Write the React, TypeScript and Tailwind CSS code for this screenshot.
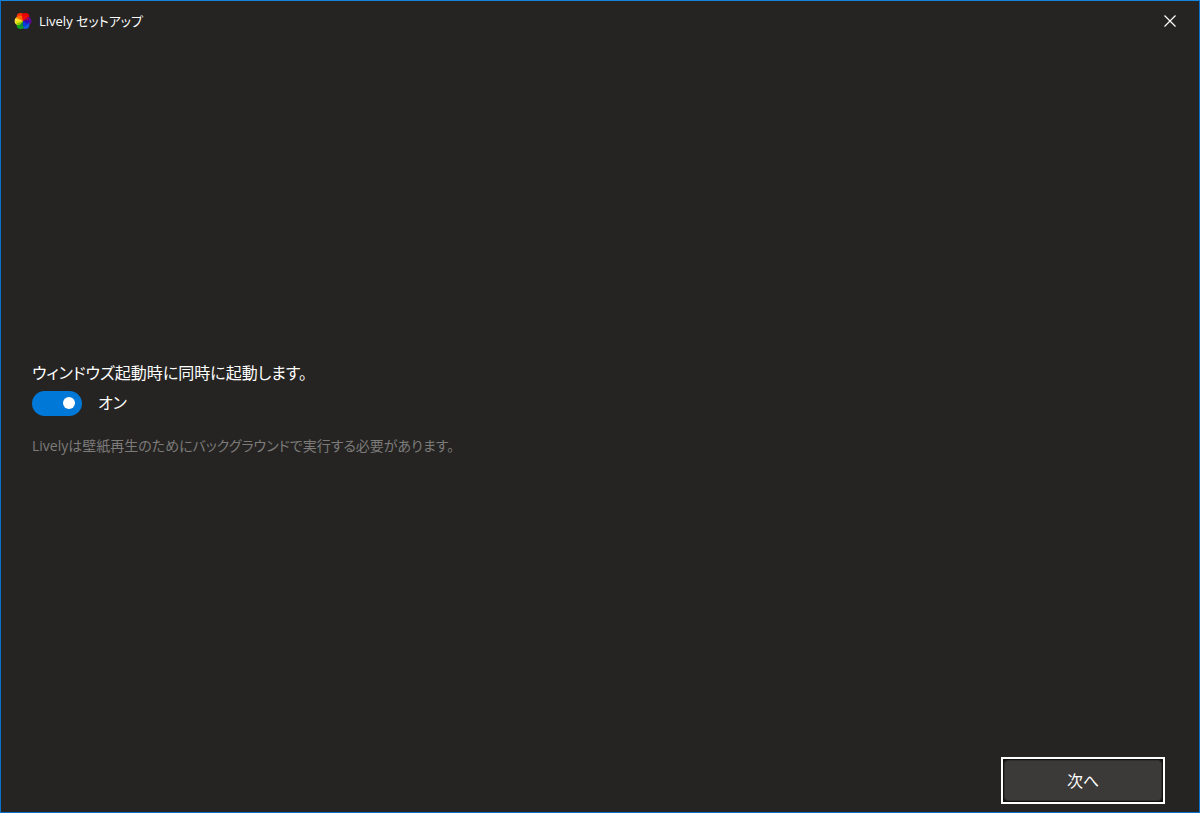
import { useState } from "react";

function Logo() {
  return (
    <svg viewBox="0 0 18 18" className="size-[18px]" aria-hidden="true">
      <circle cx="6.6" cy="5" r="4" fill="#ff3000" />
      <circle cx="11.4" cy="5" r="4" fill="#e60000" />
      <circle cx="13.4" cy="9" r="4" fill="#5a08a0" />
      <circle cx="11.4" cy="13" r="4" fill="#0d58dc" />
      <circle cx="6.6" cy="13" r="4" fill="#10a020" />
      <circle cx="4.6" cy="9" r="4" fill="#ffe040" />
      <path d="M9 9 1.6 6.4A4 4 0 0 1 4.5 5Z" fill="#ffa800" />
      <path d="M9 9 3 5.6 4.5 3.4 8 4Z" fill="#ff6a00" />
      <path d="M9 9 8 3.4 13 3.4 13.6 5.4Z" fill="#f00c08" />
      <path d="M9 9 13.4 5.2 15.6 8Z" fill="#a80040" />
      <path d="M9 9 15.6 8 13.6 12.6Z" fill="#2c08b8" />
      <path d="M9 9 13.6 12.6 9 15Z" fill="#0a38d8" />
      <path d="M9 9 9 15.6 5 13.6Z" fill="#108840" />
      <path d="M9 9 5 13.6 2 11.4Z" fill="#8cc400" />
      <path d="M9 9 2 11.4 1.8 9Z" fill="#e8e000" />
    </svg>
  );
}

export default function App() {
  const [on, setOn] = useState(true);
  return (
    <div className="flex min-h-screen flex-col border border-[#0a6fc9] border-t-[#1683dc] bg-[#252422] font-['Open_Sans','Noto_Sans_CJK_JP',sans-serif] text-white [font-feature-settings:'palt']">
      <header className="flex h-10 items-center gap-[7px] pl-[13px]">
        <Logo />
        <h1 className="flex-1 text-[13px] leading-5">Lively セットアップ</h1>
        <button type="button" aria-label="閉じる" className="flex h-10 w-[58px] items-center justify-center">
          <svg viewBox="0 0 12 12" className="size-3" fill="none" stroke="white" strokeWidth="1.2" aria-hidden="true">
            <path d="M.5.5 11.5 11.5M11.5.5.5 11.5" />
          </svg>
        </button>
      </header>
      <main className="flex flex-1 flex-col justify-center px-[31px] pt-[18px]">
        <label htmlFor="startup" className="text-base leading-6">
          ウィンドウズ起動時に同時に起動します。
        </label>
        <div className="mt-1.5 flex items-center gap-4">
          <span className="relative flex h-[25px] w-[50px]">
            <input
              id="startup"
              type="checkbox"
              role="switch"
              checked={on}
              onChange={(e) => setOn(e.target.checked)}
              className="peer h-full w-full appearance-none rounded-full bg-[#555] checked:bg-[#0078d7]"
            />
            <span className="pointer-events-none absolute top-1.5 left-1.5 size-3 rounded-full bg-white peer-checked:left-[31px]" />
          </span>
          <span className="text-base leading-6">{on ? "オン" : "オフ"}</span>
        </div>
        <p className="mt-5 text-sm leading-5 text-[#7c7b7a]">
          Livelyは壁紙再生のためにバックグラウンドで実行する必要があります。
        </p>
      </main>
      <footer className="flex justify-end pr-[34px] pb-2">
        <button type="button" className="h-[47px] w-[164px] border-2 border-white bg-[#111] p-px text-base">
          <span className="flex h-full items-center justify-center rounded-sm border border-[#2e2d2b] bg-[#3b3a38]">次へ</span>
        </button>
      </footer>
    </div>
  );
}
